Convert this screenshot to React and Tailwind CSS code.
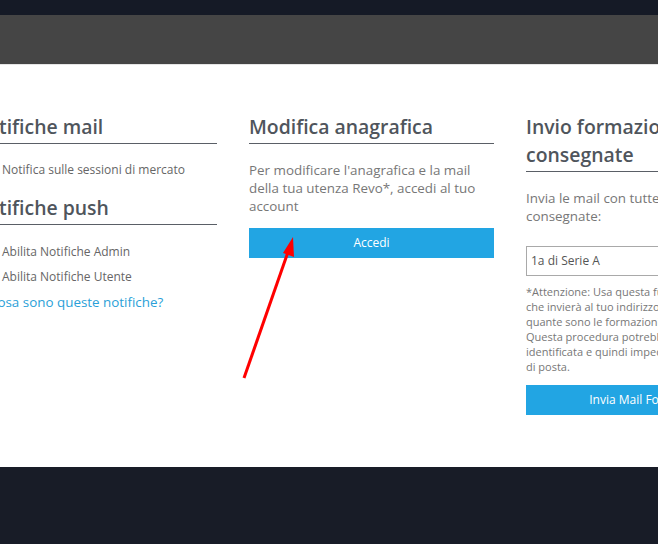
export default function App() {
  return (
    <div className="relative h-[544px] w-[658px] overflow-hidden bg-[#181c27] font-['Open_Sans',sans-serif]">
      <div className="h-[15px] bg-[#151a26]" />
      <div className="h-[49px] bg-[#454545]" />
      <div className="h-px bg-[#e5e5e5]" />
      <div className="h-[402px] overflow-hidden bg-white">
        <div className="ml-[-28px] flex gap-[32px] pt-[48px]">
          {/* col 1 */}
          <div className="w-[245px] shrink-0">
            <h2 className="border-b border-[#5a5f66] pb-[2px] text-[19.4px] font-semibold leading-[28px] text-[#4f555c]">
              Notifiche mail
            </h2>
            <label className="mt-[17px] flex items-center text-[12px] leading-[18px] text-[#666]">
              <span className="w-[30px]" />
              Notifica sulle sessioni di mercato
            </label>
            <h2 className="mt-[15px] border-b border-[#5a5f66] pb-[2px] text-[19.4px] font-semibold leading-[28px] text-[#4f555c]">
              Notifiche push
            </h2>
            <label className="mt-[18px] flex items-center text-[12px] leading-[18px] text-[#666]">
              <span className="w-[30px]" />
              Abilita Notifiche Admin
            </label>
            <label className="mt-[7px] flex items-center text-[12px] leading-[18px] text-[#666]">
              <span className="w-[30px]" />
              Abilita Notifiche Utente
            </label>
            <a className="mt-[7px] block pl-[17px] text-[13.4px] leading-[18px] text-[#2a9fd8]">
              Cosa sono queste notifiche?
            </a>
          </div>

          {/* col 2 */}
          <div className="w-[245px] shrink-0">
            <h2 className="border-b border-[#5a5f66] pb-[2px] text-[19.4px] font-semibold leading-[28px] text-[#4f555c]">
              Modifica anagrafica
            </h2>
            <p className="mt-[17px] text-[13.4px] leading-[18px] text-[#777]">
              Per modificare l'anagrafica e la mail della tua utenza Revo*, accedi al tuo account
            </p>
            <button className="mt-[13px] flex h-[30px] w-full items-center justify-center bg-[#22a5e3] text-[12px] text-white">
              Accedi
            </button>
          </div>

          {/* col 3 */}
          <div className="w-[245px] shrink-0">
            <h2 className="border-b border-[#5a5f66] pb-[2px] text-[19.4px] font-semibold leading-[28px] text-[#4f555c]">
              Invio formazioni consegnate
            </h2>
            <p className="mt-[17px] text-[13.4px] leading-[18px] text-[#777]">
              Invia le mail con tutte le formazioni consegnate:
            </p>
            <div className="mt-[21px] flex h-[30px] items-center border border-[#a9a9a9] px-[4px] text-[12px] text-[#555]">
              1a di Serie A
            </div>
            <p className="mt-[8px] whitespace-nowrap text-[11px] leading-[15px] text-[#777]">
              *Attenzione: Usa questa funzione per ricevere una mail
              <br />
              che invierà al tuo indirizzo tante mail
              <br />
              quante sono le formazioni consegnate.
              <br />
              Questa procedura potrebbe essere erroneamente
              <br />
              identificata e quindi impedita dal tuo server
              <br />
              di posta.
            </p>
            <button className="mt-[11px] flex h-[30px] w-full items-center justify-center bg-[#22a5e3] text-[12px] text-white">
              Invia Mail Formazioni
            </button>
          </div>
        </div>
      </div>

      <svg className="pointer-events-none absolute left-0 top-0" width="658" height="544">
        <line x1="244" y1="378" x2="288" y2="252" stroke="#ff0000" strokeWidth="3" />
        <polygon points="293,237 294,257 283,253" fill="#ff0000" />
      </svg>
    </div>
  );
}
